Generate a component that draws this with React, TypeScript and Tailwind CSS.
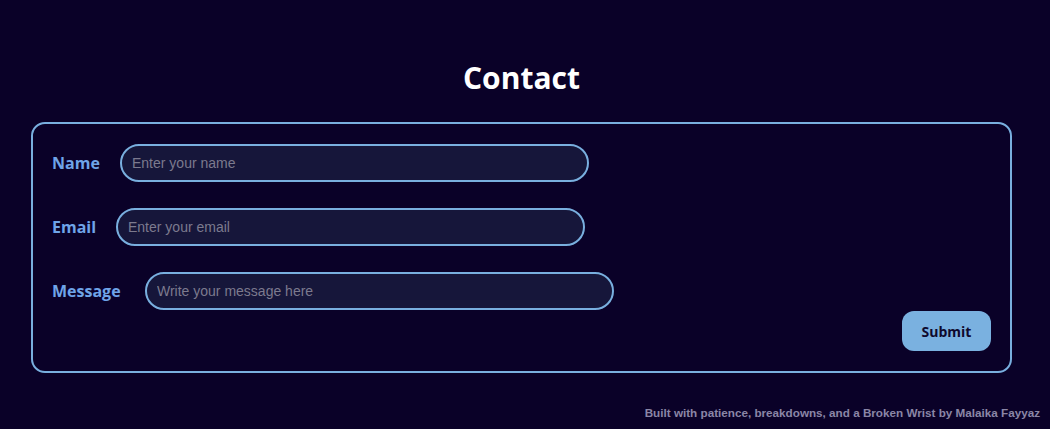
export default function App() {
  return (
    <div className="min-h-screen w-full bg-[#0a0128] font-['Open_Sans',sans-serif]">
      <div className="pl-[31px] pr-[38px] pt-[56px]">
        <h1 className="text-center text-[30px] font-bold leading-[44px] text-white">Contact</h1>
        <form className="mt-[22px] rounded-[14px] border-2 border-[#79afdf] px-[19px] pt-[20px] pb-[20px]">
          <div className="flex flex-col gap-[26px]">
            <div className="flex items-center gap-[19px]">
              <label className="w-[49px] whitespace-nowrap text-[16px] font-bold text-[#6fa4e8]">Name</label>
              <input
                placeholder="Enter your name"
                className="h-[38px] w-[469px] rounded-full border-2 border-[#79afdf] bg-[#16163a] px-[10px] font-['Liberation_Sans',sans-serif] text-[14px] text-white outline-none placeholder:text-[#7c7a8e]"
              />
            </div>
            <div className="flex items-center gap-[19px]">
              <label className="w-[45px] whitespace-nowrap text-[16px] font-bold text-[#6fa4e8]">Email</label>
              <input
                placeholder="Enter your email"
                className="h-[38px] w-[469px] rounded-full border-2 border-[#79afdf] bg-[#16163a] px-[10px] font-['Liberation_Sans',sans-serif] text-[14px] text-white outline-none placeholder:text-[#7c7a8e]"
              />
            </div>
            <div className="flex items-center gap-[19px]">
              <label className="w-[74px] whitespace-nowrap text-[16px] font-bold text-[#6fa4e8]">Message</label>
              <input
                placeholder="Write your message here"
                className="h-[38px] w-[469px] rounded-full border-2 border-[#79afdf] bg-[#16163a] px-[10px] font-['Liberation_Sans',sans-serif] text-[14px] text-white outline-none placeholder:text-[#7c7a8e]"
              />
            </div>
          </div>
          <div className="mt-[1px] flex justify-end">
            <button
              type="button"
              className="h-[40px] w-[89px] rounded-[12px] bg-[#7ab1e0] text-[14px] font-bold text-[#0f0a2e]"
            >
              Submit
            </button>
          </div>
        </form>
      </div>
      <p className="pr-[10px] pt-[31px] text-right font-['Liberation_Sans',sans-serif] text-[11.7px] font-bold text-[#8a86a6]">
        Built with patience, breakdowns, and a Broken Wrist by Malaika Fayyaz
      </p>
    </div>
  );
}
